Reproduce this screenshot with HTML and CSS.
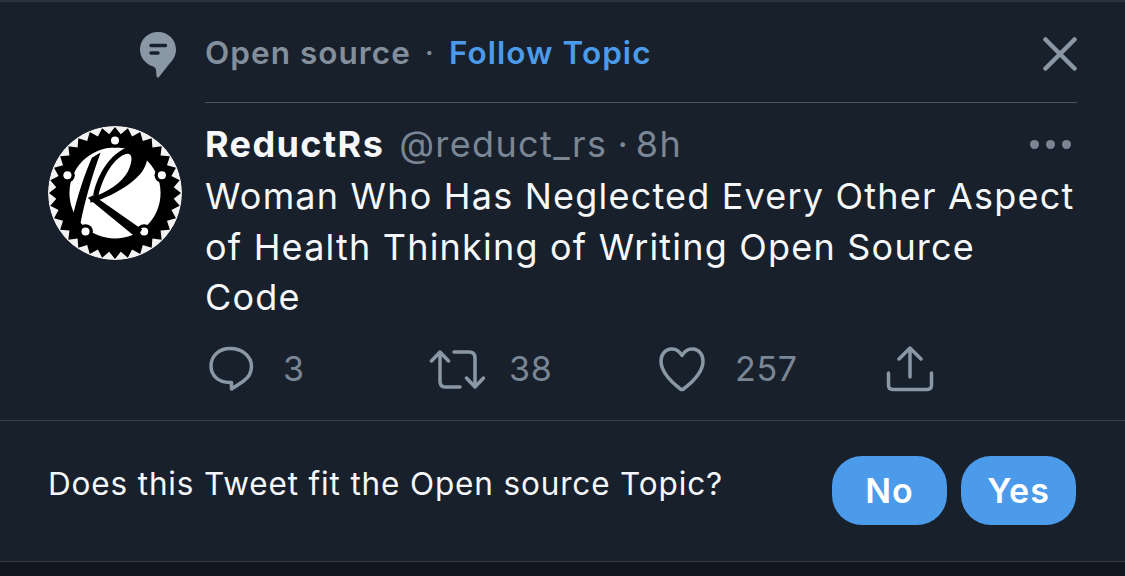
FILE: index.html
```html
<!DOCTYPE html>
<html lang="en">
<head>
<meta charset="utf-8">
<title>Tweet</title>
<link rel="stylesheet" href="styles.css">
</head>
<body>
<main class="card">
  <section class="tweet">
    <header class="topic">
      <div class="topic-icon">
        <svg width="36" height="46" viewBox="0 0 36 46"><path class="fill" d="M18 0C8 0 0 7.500 0 17.500C0 26 6 32 13 34.500C14.500 35 15.500 36 16 37.500L16.500 44C16.700 45.500 18 46 19 45L30 31C33.500 27.500 36 23 36 17.500C36 7.500 28 0 18 0Z"/><path class="cut" d="M11 13.500H25.500M11 21H18"/></svg>
      </div>
      <div class="topic-main">
        <div class="topic-text"><span class="topic-name">Open source</span><span class="dot">·</span><span class="follow">Follow Topic</span></div>
        <svg class="close" width="34" height="34" viewBox="0 0 34 34"><path d="M2.500 2.500L31.500 31.500M31.500 2.500L2.500 31.500"/></svg>
      </div>
    </header>
    <div class="body">
      <div class="avatar-col">
        <svg class="avatar" width="134" height="134" viewBox="25 25 400 400">
          <defs>
            <polygon id="gear-q" points="0,0 197,0 175.200,17.300 193.200,38.400 168.400,51 182,75.400 155.200,83 163.800,109.500 136,111.600 139.300,139.300 111.600,136 109.500,163.800 83,155.200 75.400,182 51,168.400 38.400,193.200 17.300,175.200 0,197"/>
          </defs>
          <circle cx="225" cy="225" r="200" fill="#f2f2f2"/>
          <g transform="translate(225 225)" fill="#000">
            <use href="#gear-q"/>
            <use href="#gear-q" transform="rotate(90)"/>
            <use href="#gear-q" transform="rotate(180)"/>
            <use href="#gear-q" transform="rotate(270)"/>
          </g>
          <circle cx="225" cy="225" r="136" fill="#fff"/>
          <g fill="#000">
            <circle cx="225" cy="68" r="22"/><circle cx="83" cy="172" r="22"/><circle cx="365" cy="172" r="22"/><circle cx="137" cy="340" r="22"/><circle cx="312" cy="340" r="22"/>
          </g>
          <g fill="#fff">
            <circle cx="225" cy="68" r="12"/><circle cx="83" cy="172" r="12"/><circle cx="365" cy="172" r="12"/><circle cx="137" cy="340" r="12"/><circle cx="312" cy="340" r="12"/>
          </g>
          <g fill="#000">
            <path d="M182 104L156 120C136 165 112 235 96 308L120 326C134 250 158 170 182 104Z"/>
            <path d="M160 232C170 170 220 88 285 84C328 82 332 125 304 164C276 200 212 238 152 254L150 240C205 222 245 195 264 160C278 130 278 108 262 108C225 114 187 175 174 240Z"/>
            <path d="M144 240L160 232L306 334L288 358Z"/>
          </g>
        </svg>
      </div>
      <div class="content">
        <div class="meta">
          <span class="name">ReductRs</span><span class="handle">@reduct_rs</span><span class="sep">·</span><span class="time">8h</span>
          <span class="more"><i></i><i></i><i></i></span>
        </div>
        <p class="text">Woman Who Has Neglected Every Other Aspect<br>of Health Thinking of Writing Open Source<br>Code</p>
        <div class="actions">
          <div class="action">
            <svg width="46" height="46" viewBox="0 0 46 46"><path d="M22 2.500C11 2.500 3 10 3 20C3 30 11 36.500 21.500 36.500H23.500V43L35 35.500C40 32 43.500 26.500 43.500 20.500C43.500 10 34 2.500 22 2.500Z"/></svg>
            <span class="count">3</span>
          </div>
          <div class="action">
            <svg width="56" height="46" viewBox="0 0 56 46"><path d="M2.500 15L11 6L19.500 15M11 7V35C11 39 13 41 16 41H31M25 6H40C44 6 46 8 46 12V40M37.500 32L46 41L54.500 32"/></svg>
            <span class="count">38</span>
          </div>
          <div class="action">
            <svg width="46" height="46" viewBox="0 0 46 46"><path d="M23 9.500C20 4 15.500 2.500 11.500 3C6 3.800 2 8.500 2 15C2 26 13 36.500 21.500 43C22.500 43.700 23.500 43.700 24.500 43C33 36.500 44 26 44 15C44 8.500 40 3.800 34.500 3C30.500 2.500 26 4 23 9.500Z"/></svg>
            <span class="count">257</span>
          </div>
          <div class="action">
            <svg width="48" height="46" viewBox="0 0 48 46"><path d="M24 2.500V31M13 13L24 2L35 13M2.500 27V39C2.500 42 4 43.500 7 43.500H41C44 43.500 45.500 42 45.500 39V27"/></svg>
          </div>
        </div>
      </div>
    </div>
  </section>
  <section class="prompt">
    <p class="question">Does this Tweet fit the Open source Topic?</p>
    <div class="buttons">
      <button class="btn">No</button>
      <button class="btn">Yes</button>
    </div>
  </section>
  <div class="strip"></div>
</main>
</body>
</html>
```
FILE: styles.css
```css
* { box-sizing: border-box; }
html, body { margin: 0; height: 100%; }
body {
  background: #18202c;
  font-family: Inter, "Liberation Sans", sans-serif;
  overflow: hidden;
}
.card {
  width: 1125px;
  height: 576px;
  display: flex;
  flex-direction: column;
  border-top: 2px solid #2a323e;
}
.tweet {
  height: 419px;
  border-bottom: 1px solid #363e4a;
  display: flex;
  flex-direction: column;
}
.topic {
  display: flex;
  height: 101px;
}
.topic-icon {
  width: 205px;
  padding: 30px 0 0 140px;
  flex: none;
}
.topic-icon svg { display: block; }
.fill { fill: #8a97a5; }
.cut { fill: none; stroke: #18202c; stroke-width: 3.500; stroke-linecap: round; }
.topic-main {
  width: 872px;
  flex: none;
  border-bottom: 1px solid #4b535f;
  display: flex;
  align-items: flex-start;
  justify-content: space-between;
  padding-top: 32px;
}
.topic-text {
  font-size: 31.500px;
  font-weight: 600;
  line-height: 38px;
  color: #838f9d;
  letter-spacing: 1.050px;
}
.dot { margin: 0 14px; font-weight: 400; }
.follow { color: #4b9bea; }
.close { margin-top: 3px; }
.close path { fill: none; stroke: #8a97a5; stroke-width: 4.500; stroke-linecap: round; }
.body { display: flex; flex: 1; }
.avatar-col { width: 205px; flex: none; padding: 23px 0 0 48px; }
.avatar { display: block; border-radius: 50%; }
.content { width: 872px; flex: none; }
.meta {
  display: flex;
  align-items: center;
  height: 40px;
  margin-top: 21px;
  font-size: 36px;
  line-height: 40px;
}
.name { font-weight: 700; color: #f5f7f9; letter-spacing: 1.400px; }
.handle { color: #7a8694; margin-left: 15px; letter-spacing: 1.360px; }
.sep { color: #7a8694; margin: 0 8px 0 10px; }
.time { color: #7a8694; letter-spacing: 1.360px; }
.more { margin-left: auto; margin-right: 6px; display: flex; gap: 7px; }
.more i { width: 9px; height: 9px; border-radius: 50%; background: #7a8694; display: block; }
.text {
  margin: 7px 0 0;
  font-size: 36px;
  line-height: 50.500px;
  letter-spacing: 1.200px;
  color: #f5f7f9;
  white-space: nowrap;
}
.actions {
  display: grid;
  grid-template-columns: 225px 229px 227px 100px;
  margin-top: 23px;
}
.action { display: flex; align-items: center; height: 46px; }
.action svg { flex: none; margin-left: 3px; }
.action svg path { fill: none; stroke: #8a97a5; stroke-width: 3.500px; stroke-linecap: round; stroke-linejoin: round; }
.count { font-size: 34px; letter-spacing: .7px; color: #7a8694; margin-left: 29px; }
.action:nth-child(2) svg { margin-left: -1px; }
.action:nth-child(2) .count { margin-left: 24px; }
.action:nth-child(3) svg { margin-left: 0; }
.action:nth-child(3) .count { margin-left: 30px; }
.action:nth-child(4) svg { margin-left: 0; }
.prompt {
  height: 141px;
  display: flex;
  align-items: center;
  justify-content: space-between;
  padding: 0 48px 0 49px;
  border-bottom: 1px solid #363e4a;
}
.question {
  margin: 0 0 0 -1px;
  font-size: 31.500px;
  line-height: 38px;
  letter-spacing: .85px;
  color: #f5f7f9;
  position: relative;
  top: -7px;
}
.buttons { display: flex; gap: 14px; position: relative; top: -1px; left: -1px; }
.btn {
  width: 115px;
  height: 69px;
  border: 0;
  padding: 0;
  border-radius: 30px;
  background: #4b9bea;
  color: #fff;
  font: 600 34px Inter, sans-serif;
  letter-spacing: 1px;
}
.strip { flex: 1; background: #11171f; }
```
